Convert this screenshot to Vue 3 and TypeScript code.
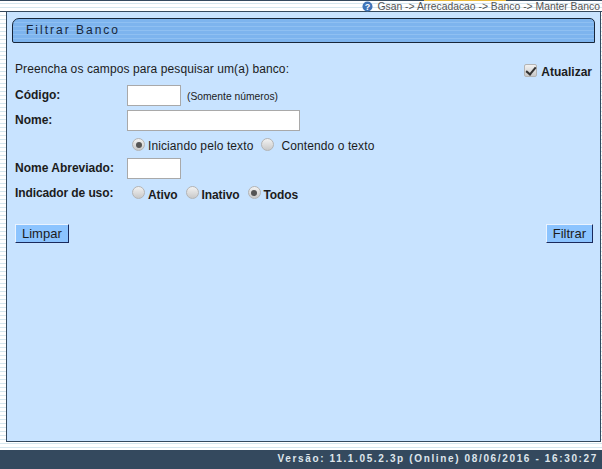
<script setup lang="ts">
const usoOptions = [
  { label: 'Ativo', checked: false },
  { label: 'Inativo', checked: false },
  { label: 'Todos', checked: true }
]
</script>

<template>
  <div class="page">
    <div class="topline">
      <div class="accent"></div>
    </div>
    <div class="crumbs">
      <svg class="help" width="11" height="11" viewBox="0 0 11 11">
        <circle cx="5.5" cy="5.5" r="5" fill="#3f74b8" />
        <text x="5.5" y="8.6" text-anchor="middle" font-size="9" font-weight="700" fill="#fff" font-family="Liberation Sans, sans-serif">?</text>
      </svg>
      <span>Gsan -&gt; Arrecadacao -&gt; Banco -&gt; Manter Banco</span>
    </div>

    <div class="panel">
      <div class="tab">Filtrar Banco</div>

      <form class="form" @submit.prevent>
        <div class="intro">
          <span class="plain">Preencha os campos para pesquisar um(a) banco:</span>
          <label class="refresh"><input type="checkbox" checked />Atualizar</label>
        </div>

        <div class="row r-codigo">
          <label class="name">Código:</label>
          <input class="field short" type="text" />
          <small class="hint">(Somente números)</small>
        </div>
        <div class="row r-nome">
          <label class="name">Nome:</label>
          <input class="field long" type="text" />
        </div>
        <div class="row r-modo">
          <span class="name"></span>
          <label class="opt"><input type="radio" name="modo" checked /><span class="plain">Iniciando pelo texto</span></label>
          <label class="opt second"><input type="radio" name="modo" /><span class="plain">Contendo o texto</span></label>
        </div>
        <div class="row r-abrev">
          <label class="name">Nome Abreviado:</label>
          <input class="field short" type="text" />
        </div>
        <div class="row r-uso">
          <span class="name tight">Indicador de uso:</span>
          <label v-for="o in usoOptions" :key="o.label" class="opt bold">
            <input type="radio" name="uso" :checked="o.checked" /><span>{{ o.label }}</span>
          </label>
        </div>

        <div class="actions">
          <button type="button" class="btn">Limpar</button>
          <button type="button" class="btn">Filtrar</button>
        </div>
      </form>
    </div>

    <div class="footer">Versão: 11.1.05.2.3p (Online) 08/06/2016 - 16:30:27</div>
  </div>
</template>

<style>
html, body {
  margin: 0;
  background: #fff;
}
</style>

<style scoped>
.page {
  width: 602px;
  height: 469px;
  box-sizing: border-box;
  overflow: hidden;
  display: flex;
  flex-direction: column;
  font-family: "Liberation Sans", Arial, sans-serif;
  font-size: 12px;
  color: #1c1c1c;
  background: repeating-linear-gradient(to bottom, #fff 0, #fff 3px, #d5e6ee 3px, #d5e6ee 4px);
}

.topline {
  height: 1px;
  background: #34495e;
}

.accent {
  width: 82px;
  height: 1px;
  margin-left: 424px;
  background: #e8b93c;
}

.crumbs {
  height: 10px;
  display: flex;
  justify-content: flex-end;
  align-items: center;
  gap: 4px;
  padding-right: 2px;
  font-size: 10.36px;
  color: #555;
  border-bottom: 1px solid #34495e;
}

.panel {
  flex: 1;
  margin: 0 1px 8px 6px;
  padding: 6px 5px 0 5px;
  background: #c8e3ff;
  border: 1px solid #34495e;
  border-width: 0 1px 1px 1px;
  display: flex;
  flex-direction: column;
}

.tab {
  height: 25px;
  box-sizing: border-box;
  border: 1px solid #17263a;
  border-radius: 7px 5px 0 2px;
  padding-left: 13px;
  font-size: 12px;
  line-height: 23px;
  letter-spacing: 2px;
  color: #17263a;
  background: repeating-linear-gradient(to bottom, #7db4ee 0, #7db4ee 3px, #8fc0f2 3px, #8fc0f2 4px);
}

.form {
  padding: 16px 2px 0 3px;
}

.intro {
  display: flex;
  justify-content: space-between;
  align-items: center;
  height: 20px;
}

.plain {
  letter-spacing: 0.1px;
}

.refresh {
  display: flex;
  align-items: center;
  font-weight: 700;
  margin: 6px 1px 0 0;
}

.refresh input {
  margin: -4px 4px 0 0;
}

input[type="checkbox"],
input[type="radio"] {
  appearance: none;
  position: relative;
  width: 13px;
  height: 13px;
  box-sizing: border-box;
  flex-shrink: 0;
  border: 1px solid #b4b4b4;
  background: linear-gradient(to bottom, #f2f2f2, #c9c9c9);
}

input[type="checkbox"] {
  border-radius: 2px;
}

input[type="checkbox"]:checked::after {
  content: "";
  position: absolute;
  left: 3px;
  top: 0;
  width: 4px;
  height: 8px;
  border: solid #333;
  border-width: 0 2px 2px 0;
  transform: rotate(40deg);
}

input[type="radio"] {
  border-radius: 50%;
}

input[type="radio"]:checked::after {
  content: "";
  position: absolute;
  left: 2.5px;
  top: 2.5px;
  width: 6px;
  height: 6px;
  border-radius: 50%;
  background: #555;
}

.row {
  display: flex;
  align-items: center;
}

.r-codigo { margin-top: 6px; height: 21px; }
.r-nome { margin-top: 4px; height: 21px; }
.r-modo { height: 27px; }
.r-abrev { height: 21px; }
.r-uso { height: 27px; }

.name {
  width: 112px;
  box-sizing: border-box;
  padding: 0 0 1px 0;
  font-weight: 700;
  flex-shrink: 0;
}

.name.tight {
  padding-bottom: 0;
  letter-spacing: -0.1px;
}

.field {
  height: 21px;
  box-sizing: border-box;
  border: 1px solid #a9a9a9;
  background: #fff;
  padding: 0;
}

.short { width: 54px; }
.long { width: 173px; }

.hint {
  margin-left: 6px;
  padding-top: 2px;
  font-size: 10.3px;
}

.opt {
  display: flex;
  align-items: center;
  margin-left: 5px;
}

.opt input {
  margin: 0 3px 0 0;
}

.opt span {
  padding-top: 3px;
}

.opt.second {
  margin-left: 8px;
}

.opt.second input {
  margin-right: 7px;
}

.opt.bold {
  font-weight: 700;
  margin-right: 3px;
}

.opt.bold span {
  padding-top: 5px;
  letter-spacing: -0.1px;
}

.opt.bold + .opt.bold {
  margin-left: 5px;
}

.actions {
  display: flex;
  justify-content: space-between;
  margin-top: 18px;
}

.btn {
  height: 19px;
  padding: 0 6px;
  font-family: inherit;
  font-size: 13px;
  color: #1c1c1c;
  background: #8cc4ff;
  border: 1px solid;
  border-color: #eaf3ff #1a2a5c #1a2a5c #eaf3ff;
}

.footer {
  height: 19px;
  background: #34495e;
  color: #dfe6ec;
  font-size: 10px;
  font-weight: 700;
  letter-spacing: 1.64px;
  line-height: 18px;
  text-align: right;
  padding-right: 4px;
}
</style>
